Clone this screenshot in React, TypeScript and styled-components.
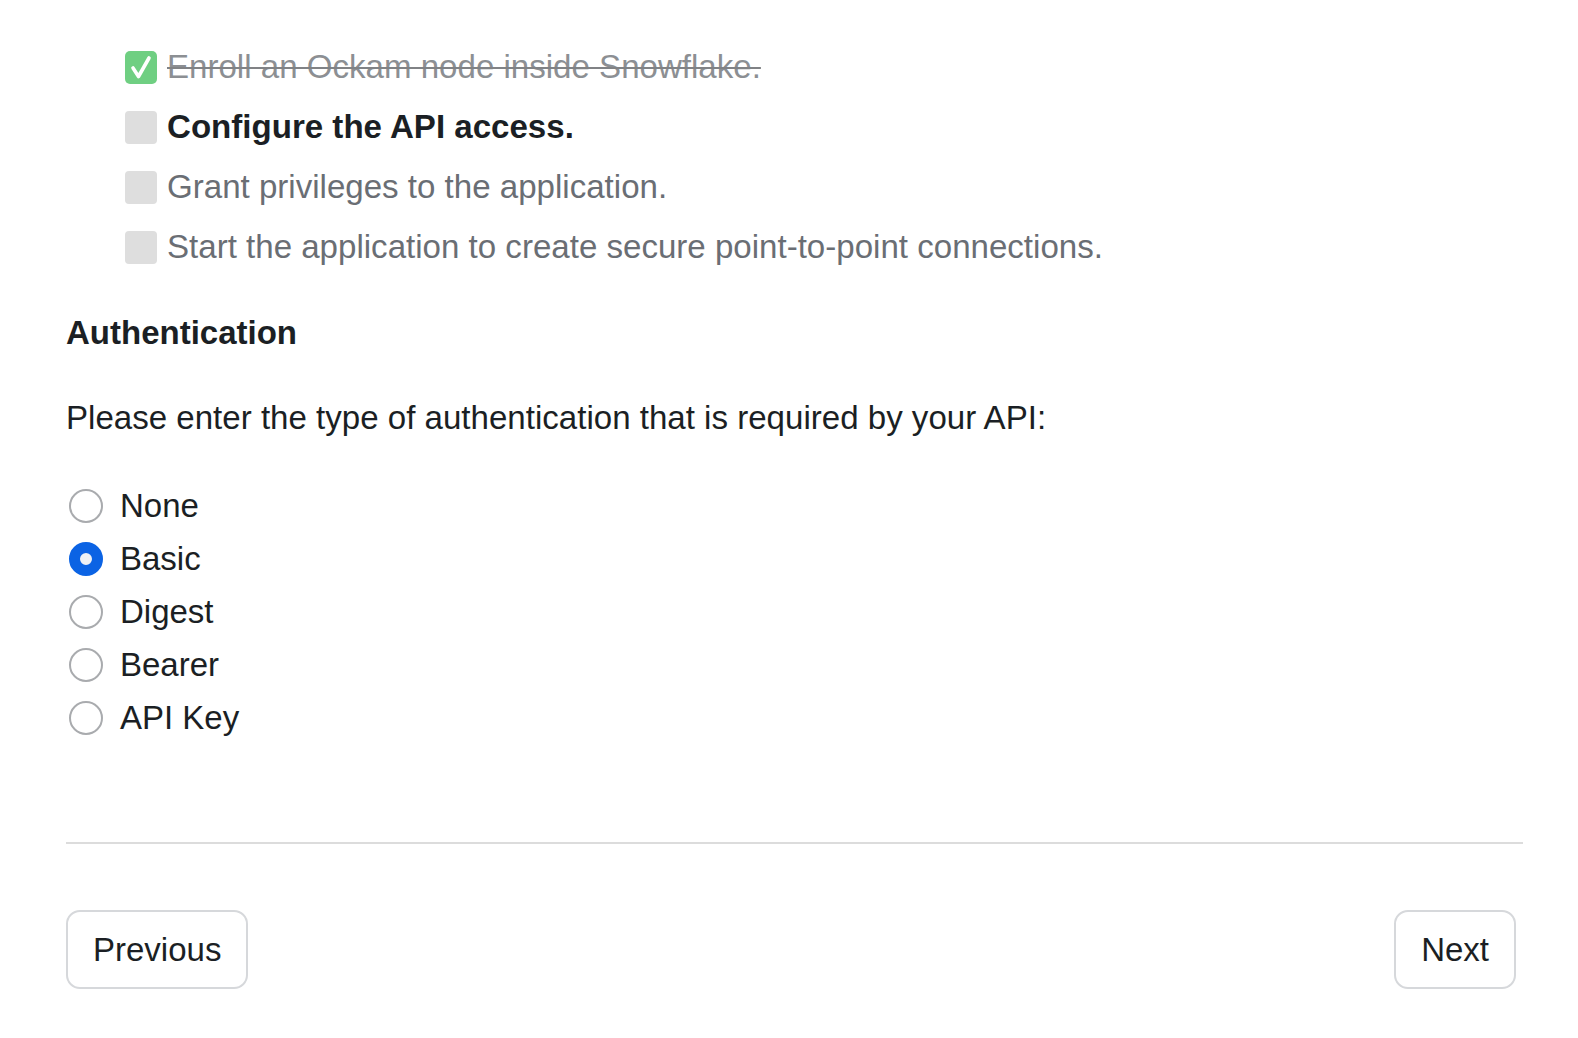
import React from "react";
import styled, { createGlobalStyle, css } from "styled-components";

const Global = createGlobalStyle`
  html, body { margin: 0; padding: 0; background: #ffffff; }
  body {
    font-family: "Liberation Sans", Arial, Helvetica, sans-serif;
    color: #1b1f24;
    -webkit-font-smoothing: antialiased;
  }
  * { box-sizing: border-box; }
`;

const Page = styled.main`
  display: flex;
  flex-direction: column;
  padding: 37px 55px 40px 66px;
`;

const Checklist = styled.ul`
  list-style: none;
  margin: 0;
  padding: 0 0 0 59px;
  display: flex;
  flex-direction: column;
`;

type StepState = "done" | "current" | "todo";

const Step = styled.li<{ $state: StepState }>`
  height: 60px;
  display: flex;
  align-items: center;
  gap: 10px;
  font-size: 33.1px;
  line-height: 40px;
  ${({ $state }) =>
    $state === "done"
      ? css`
          color: #8c8f93;
          text-decoration: line-through;
          text-decoration-color: #808285;
          text-decoration-thickness: 2px;
        `
      : $state === "current"
      ? css`
          color: #1b1f24;
          font-weight: 700;
        `
      : css`
          color: #6a6e74;
        `}
`;

const Box = styled.span`
  flex: 0 0 auto;
  width: 32px;
  height: 33px;
  border-radius: 4px;
  background: #dedede;
`;

const DoneBox = styled.svg`
  flex: 0 0 auto;
  width: 32px;
  height: 33px;
  display: block;
`;

const Heading = styled.h2`
  margin: 36px 0 0;
  font-size: 33px;
  line-height: 40px;
  font-weight: 700;
  color: #1b1f24;
`;

const Prompt = styled.p`
  margin: 45px 0 0;
  font-size: 33.1px;
  line-height: 40px;
  color: #1b1f24;
`;

const RadioGroup = styled.div`
  margin-top: 41px;
  display: flex;
  flex-direction: column;
  padding-left: 3px;
`;

const RadioRow = styled.label`
  height: 53px;
  display: flex;
  align-items: center;
  gap: 17px;
  font-size: 33px;
  color: #1b1f24;
  cursor: pointer;
`;

const RadioInput = styled.input`
  appearance: none;
  -webkit-appearance: none;
  margin: 0;
  width: 34px;
  height: 34px;
  border-radius: 50%;
  border: 2px solid #a9abae;
  background: #ffffff;
  flex: 0 0 auto;
  &:checked {
    border: 11px solid #0b63e4;
    background: #eef1f5;
  }
`;

const Divider = styled.hr`
  margin: 98px 0 0;
  border: none;
  height: 2px;
  background: #dcdcdc;
`;

const Footer = styled.div`
  margin-top: 66px;
  display: flex;
  justify-content: space-between;
  padding-right: 7px;
`;

const Button = styled.button`
  height: 79px;
  padding: 0 25px;
  border: 2px solid #d6d8db;
  border-radius: 14px;
  background: #ffffff;
  font-family: inherit;
  font-size: 33px;
  color: #1b1f24;
  cursor: pointer;
`;

const steps: { label: string; state: StepState }[] = [
  { label: "Enroll an Ockam node inside Snowflake.", state: "done" },
  { label: "Configure the API access.", state: "current" },
  { label: "Grant privileges to the application.", state: "todo" },
  { label: "Start the application to create secure point-to-point connections.", state: "todo" },
];

const options = ["None", "Basic", "Digest", "Bearer", "API Key"];

function CheckedIcon() {
  return (
    <DoneBox viewBox="0 0 32 33">
      <rect x="0" y="0" width="32" height="33" rx="5" fill="#6fcf82" />
      <path
        d="M8 17 L13.5 25.5 L24 7"
        fill="none"
        stroke="#ffffff"
        strokeWidth="3.6"
        strokeLinecap="round"
        strokeLinejoin="round"
      />
    </DoneBox>
  );
}

export default function App() {
  const [auth, setAuth] = React.useState("Basic");
  return (
    <>
      <Global />
      <Page>
        <Checklist>
          {steps.map((s) => (
            <Step key={s.label} $state={s.state}>
              {s.state === "done" ? <CheckedIcon /> : <Box />}
              <span>{s.label}</span>
            </Step>
          ))}
        </Checklist>
        <Heading>Authentication</Heading>
        <Prompt>Please enter the type of authentication that is required by your API:</Prompt>
        <RadioGroup>
          {options.map((o) => (
            <RadioRow key={o}>
              <RadioInput
                type="radio"
                name="auth"
                checked={auth === o}
                onChange={() => setAuth(o)}
              />
              {o}
            </RadioRow>
          ))}
        </RadioGroup>
        <Divider />
        <Footer>
          <Button type="button">Previous</Button>
          <Button type="button">Next</Button>
        </Footer>
      </Page>
    </>
  );
}
